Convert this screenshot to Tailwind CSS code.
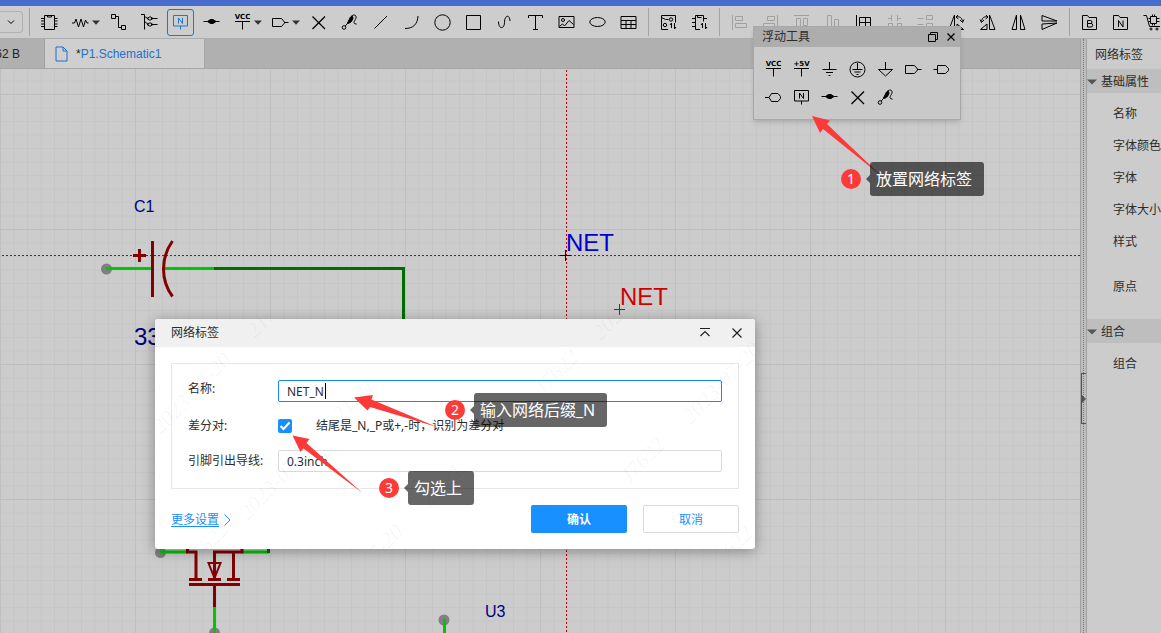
<!DOCTYPE html>
<html lang="zh-CN">
<head>
<meta charset="utf-8">
<title>P1.Schematic1</title>
<script src="https://cdn.jsdelivr.net/npm/@tailwindcss/browser@4"></script>
</head>
<body class="relative flex h-screen flex-col overflow-hidden bg-[#cccccc] font-['Noto_Sans','Noto_Sans_CJK_SC',sans-serif] text-xs text-[#2c2c2c]">

<!-- Shared icon shapes, 23x23 grid -->
<svg class="hidden" aria-hidden="true">
  <defs>
    <symbol id="chip" viewBox="0 0 23 23"><path d="M6.5 4.5h10v14h-10zM9.5 4.5v1.5h4V4.5M3 7.5h3.5M3 10h3.5M3 13h3.5M3 15.5h3.5M16.5 7.5h3M16.5 10h3M16.5 13h3M16.5 15.5h3"/></symbol>
    <symbol id="res" viewBox="0 0 23 23"><path d="M3 12h2.5l1.5-4 2.5 8 2.5-8 2.5 8 2-7 1.5 3h1.5"/></symbol>
    <symbol id="wire" viewBox="0 0 23 23"><path d="M4.5 3.5h4v4h-4zM14.5 14.5h4v4h-4zM8.5 5.5h3v11h3"/></symbol>
    <symbol id="bus" viewBox="0 0 23 23"><path d="M3 3.5h3.5v15M6.5 5.5l4 2.5M6.5 10.5l4 3M13 7.5h6.5M13 13.5h6.5"/><path d="M9 7.5l3-1.8 3 1.8-3 1.8zM9 13.5l3-1.8 3 1.8-3 1.8z"/></symbol>
    <symbol id="label" viewBox="0 0 23 23"><path d="M4.5 4.5h14V15h-14zM11.5 15v3.5M9.5 12.5V7l4 5.5V7"/></symbol>
    <symbol id="junction" viewBox="0 0 23 23"><path d="M3.5 10.5h16"/><path d="M7.5 10.5l3-2H13l3 2-3 2h-2.5z" fill="currentColor"/></symbol>
    <symbol id="vcc" viewBox="0 0 23 23"><path d="M4 10.5h15M11.5 10.5v8"/><text x="11.5" y="8" text-anchor="middle" font-size="7" font-weight="bold" font-family="DejaVu Sans" fill="currentColor" stroke="none">VCC</text></symbol>
    <symbol id="v5" viewBox="0 0 23 23"><path d="M4 10.5h15M11.5 10.5v8"/><text x="11.5" y="8" text-anchor="middle" font-size="7" font-weight="bold" font-family="DejaVu Sans" fill="currentColor" stroke="none">+5V</text></symbol>
    <symbol id="gnd" viewBox="0 0 23 23"><path d="M11.5 4v7.5M4.5 11.5h14M8 14.5h7M10.5 17.5h2"/></symbol>
    <symbol id="earth" viewBox="0 0 23 23"><circle cx="11.5" cy="11.5" r="7.5"/><path d="M11.5 5v6.5M6.5 11.5h10M8.5 14h6M10.5 16.5h2"/></symbol>
    <symbol id="agnd" viewBox="0 0 23 23"><path d="M11.5 4v7.5M4.5 11.5h14l-7 6.5z"/></symbol>
    <symbol id="out" viewBox="0 0 23 23"><path d="M3.5 7.5h9l3 3.5v1l-3 3.5h-9zM15.5 11.5h4"/></symbol>
    <symbol id="in" viewBox="0 0 23 23"><path d="M7.5 7.5h8l3 3v2l-3 3h-8zM3.5 11.5h4"/></symbol>
    <symbol id="bi" viewBox="0 0 23 23"><path d="M7 11.5l2.5-4H16l2.5 3v2l-2.5 3H9.5zM3 11.5h4"/></symbol>
    <symbol id="cross" viewBox="0 0 23 23"><path d="M5.5 5.5L18 18M18 5.5L5.5 18" stroke-width="1.3"/></symbol>
    <symbol id="probe" viewBox="0 0 23 23"><circle cx="6" cy="16.5" r="1.8"/><path d="M7.3 15l2.5-3M13 5.500c3.500-3 5.500-1 5 1.500-.5 2-3 4-1.500 5.500l2 .7"/><path d="M9.500 12l3-6 2-.8.5 2-1.500 3.300-3 2z" fill="currentColor"/></symbol>
    <symbol id="line" viewBox="0 0 23 23"><path d="M5.500 17.500L18 5"/></symbol>
    <symbol id="arc" viewBox="0 0 23 23"><path d="M5 17.500c8 0 12.500-4 13-12.500"/></symbol>
    <symbol id="circle" viewBox="0 0 23 23"><circle cx="11.5" cy="11.5" r="7.7"/></symbol>
    <symbol id="square" viewBox="0 0 23 23"><path d="M4.500 4.500h14v14h-14z"/></symbol>
    <symbol id="curve" viewBox="0 0 23 23"><path d="M5.500 10.500c0 8 6 8 6 1s5-9 5.500-1.500"/></symbol>
    <symbol id="tee" viewBox="0 0 23 23"><path d="M4.500 7V4.500h14V7M11.500 4.500v14M9 18.500h5"/></symbol>
    <symbol id="pic" viewBox="0 0 23 23"><path d="M4 5.500h15v11H4zM4.500 15.500l3-2.500 2 2 4.500-5.500 4.500 4"/><circle cx="8" cy="9" r="1.5"/></symbol>
    <symbol id="ellipse" viewBox="0 0 23 23"><ellipse cx="11.5" cy="11" rx="7.7" ry="4.5"/></symbol>
    <symbol id="table" viewBox="0 0 23 23"><path d="M4 5.500h15v12H4zM4 9.500h15M4 13.500h15M9 9.500v8M14 9.500v8"/></symbol>
    <symbol id="symA" viewBox="0 0 23 23"><path d="M11 18.500H4.500v-14h14v7M4.500 6.500l4 2h3M14.500 17v-5l-1.500 2M17.500 12v6l1.500-2"/><circle cx="8" cy="14" r="1.7"/><circle cx="14" cy="8.5" r="1.7"/></symbol>
    <symbol id="symB" viewBox="0 0 23 23"><path d="M12 18.500H7.500v-14h8v6M9.500 4.500v2h4M4 7.500h3.500M4 11.500h3.500M4 15.500h3.500M15.500 7.500H19M14.500 17v-5l-1.500 2M17.500 12v6l1.500-2"/></symbol>
    <symbol id="alL" viewBox="0 0 23 23"><path d="M4.500 4v15M7.500 5.500h7v4h-7zM7.500 12.500h11v4h-11z"/></symbol>
    <symbol id="alR" viewBox="0 0 23 23"><path d="M18.500 4v15M8.500 5.500h7v4h-7zM4.500 12.500h11v4h-11z"/></symbol>
    <symbol id="alT" viewBox="0 0 23 23"><path d="M4 4.500h15M6.500 7.500h4v11h-4zM13.500 7.500h4v7h-4z"/></symbol>
    <symbol id="alB" viewBox="0 0 23 23"><path d="M4 18.500h15M6.500 4.500h4v11h-4zM13.500 8.500h4v7h-4z"/></symbol>
    <symbol id="gridic" viewBox="0 0 23 23"><path d="M4.500 4v15M7.500 6.500h11v12h-11zM13.500 6.500v12M7.500 11.500h11"/></symbol>
    <symbol id="disH" viewBox="0 0 23 23"><path d="M8.500 4v6M14.500 4v6M5 7.500h3.500M14.500 7.500H18M5.500 12.500h4v5h-4zM14.500 12.500h4v5h-4z"/></symbol>
    <symbol id="disV" viewBox="0 0 23 23"><path d="M3.500 7.500h6M12.500 4.500h6v4h-6zM3.500 13.500h6M12.500 12.500h6v4h-6z"/></symbol>
    <symbol id="rotL" viewBox="0 0 23 23"><path d="M9.500 4v14.500H4zM12 18.500h6.500L12 13zM11 6c4-1 6 1 6.500 4.500M15 9l2.500 2.500L19 8.500M13 4l-2 2 2.500 2"/></symbol>
    <symbol id="rotR" viewBox="0 0 23 23"><path d="M13.500 4v14.500H19zM11 18.500H4.500L11 13zM12 6c-4-1-6 1-6.500 4.500M8 9l-2.500 2.500L4 8.500M10 4l2 2-2.500 2"/></symbol>
    <symbol id="flipH" viewBox="0 0 23 23"><path d="M9.500 4v14.500H5zM13.500 4v14.500H18z"/></symbol>
    <symbol id="flipV" viewBox="0 0 23 23"><path d="M4 4.500v5.500h15zM4 18.500V13l15-1z"/></symbol>
    <symbol id="fB" viewBox="0 0 23 23"><path d="M4.500 18.500v-14h5l1.500 2h7.500v12zM9.500 9.500h3a1.400 1.400 0 0 1 0 3h-3zM9.500 12.500h3.500a1.500 1.500 0 0 1 0 3.500H9.500z"/></symbol>
    <symbol id="fN" viewBox="0 0 23 23"><path d="M4.500 18.500v-14h5l1.500 2h7.500v12zM9.500 16V9.500l4.500 6.500V9.500"/></symbol>
    <symbol id="cart" viewBox="0 0 23 23"><path d="M3.500 4.500h3l3 11H20M10.500 5.500h6v7h-6zM8.500 7.500h2M8.500 10.500h2M16.500 7.500h3M16.500 10.500h3M12.500 3.500v2M14.500 3.500v2M12.500 12.500v2M14.500 12.500v2"/><circle cx="11" cy="18" r="1"/><circle cx="17" cy="18" r="1"/></symbol>
    <symbol id="caret" viewBox="0 0 8 5"><path d="M0 .5h8L4 4.800z" fill="#333" stroke="none"/></symbol>
    <symbol id="tri" viewBox="0 0 10 6"><path d="M0 .5h10L5 5.500z" fill="#555" stroke="none"/></symbol>
  </defs>
</svg>

<div class="h-1.5 shrink-0 bg-[#466dce]"></div>

<!-- Toolbar -->
<div class="flex h-[33px] shrink-0 items-center overflow-hidden border-b border-[#adadad] bg-[#cdcdcd] text-black [&_svg]:shrink-0 [&_svg]:fill-none [&_svg]:stroke-current [&_button]:flex [&_button]:h-[27px] [&_button]:shrink-0 [&_button]:items-center">
  <button aria-label="选择" class="!h-[22px] w-[23px] justify-center rounded-r-sm border border-l-0 border-[#b0b0b4]"><svg class="h-2 w-2" viewBox="0 0 8 8"><path d="M1 2.500l3 3 3-3"/></svg></button>
  <div class="ml-1.5 mr-1 h-7 w-px shrink-0 bg-[#a3a3a3]"></div>
  <button aria-label="器件" class="w-[31px] justify-center"><svg class="size-[23px]"><use href="#chip"/></svg></button>
  <button aria-label="电阻" class="w-[38px] pl-1"><svg class="size-[23px]"><use href="#res"/></svg><svg class="h-[5px] w-2"><use href="#caret"/></svg></button>
  <button aria-label="导线" class="w-[31px] justify-center"><svg class="size-[23px]"><use href="#wire"/></svg></button>
  <button aria-label="总线" class="w-[31px] justify-center"><svg class="size-[23px]"><use href="#bus"/></svg></button>
  <button aria-label="网络标签" class="mx-0.5 w-[27px] justify-center rounded-[3px] border border-[#1b78d0] text-[#1b78d0]"><svg class="size-[23px]"><use href="#label"/></svg></button>
  <button aria-label="短接符" class="w-[31px] justify-center"><svg class="size-[23px]"><use href="#junction"/></svg></button>
  <button aria-label="电源" class="w-[38px] pl-1"><svg class="size-[23px]"><use href="#vcc"/></svg><svg class="h-[5px] w-2"><use href="#caret"/></svg></button>
  <button aria-label="网络端口" class="w-[38px] pl-1"><svg class="size-[23px]"><use href="#out"/></svg><svg class="h-[5px] w-2"><use href="#caret"/></svg></button>
  <button aria-label="非连接标识" class="w-[31px] justify-center"><svg class="size-[23px]"><use href="#cross"/></svg></button>
  <button aria-label="探针" class="w-[31px] justify-center"><svg class="size-[23px]"><use href="#probe"/></svg></button>
  <button aria-label="折线" class="w-[31px] justify-center"><svg class="size-[23px]"><use href="#line"/></svg></button>
  <button aria-label="圆弧" class="w-[31px] justify-center"><svg class="size-[23px]"><use href="#arc"/></svg></button>
  <button aria-label="圆" class="w-[31px] justify-center"><svg class="size-[23px]"><use href="#circle"/></svg></button>
  <button aria-label="矩形" class="w-[31px] justify-center"><svg class="size-[23px]"><use href="#square"/></svg></button>
  <button aria-label="曲线" class="w-[31px] justify-center"><svg class="size-[23px]"><use href="#curve"/></svg></button>
  <button aria-label="文本" class="w-[31px] justify-center"><svg class="size-[23px]"><use href="#tee"/></svg></button>
  <button aria-label="图片" class="w-[31px] justify-center"><svg class="size-[23px]"><use href="#pic"/></svg></button>
  <button aria-label="椭圆" class="w-[31px] justify-center"><svg class="size-[23px]"><use href="#ellipse"/></svg></button>
  <button aria-label="表格" class="w-[31px] justify-center"><svg class="size-[23px]"><use href="#table"/></svg></button>
  <div class="mx-1 h-7 w-px shrink-0 bg-[#a3a3a3]"></div>
  <button aria-label="符号向导" class="w-[31px] justify-center"><svg class="size-[23px]"><use href="#symA"/></svg></button>
  <button aria-label="替换器件" class="w-[31px] justify-center"><svg class="size-[23px]"><use href="#symB"/></svg></button>
  <div class="mx-1 h-7 w-px shrink-0 bg-[#a3a3a3]"></div>
  <button aria-label="左对齐" class="w-[31px] justify-center text-[#a0a0a0]"><svg class="size-[23px]"><use href="#alL"/></svg></button>
  <button aria-label="右对齐" class="w-[31px] justify-center text-[#a0a0a0]"><svg class="size-[23px]"><use href="#alR"/></svg></button>
  <button aria-label="顶部对齐" class="w-[31px] justify-center text-[#a0a0a0]"><svg class="size-[23px]"><use href="#alT"/></svg></button>
  <button aria-label="底部对齐" class="w-[31px] justify-center text-[#a0a0a0]"><svg class="size-[23px]"><use href="#alB"/></svg></button>
  <button aria-label="对齐栅格" class="w-[31px] justify-center"><svg class="size-[23px]"><use href="#gridic"/></svg></button>
  <button aria-label="水平分布" class="w-[31px] justify-center text-[#a0a0a0]"><svg class="size-[23px]"><use href="#disH"/></svg></button>
  <button aria-label="垂直分布" class="w-[31px] justify-center text-[#a0a0a0]"><svg class="size-[23px]"><use href="#disV"/></svg></button>
  <button aria-label="左转" class="w-[31px] justify-center"><svg class="size-[23px]"><use href="#rotL"/></svg></button>
  <button aria-label="右转" class="w-[31px] justify-center"><svg class="size-[23px]"><use href="#rotR"/></svg></button>
  <button aria-label="水平翻转" class="w-[31px] justify-center"><svg class="size-[23px]"><use href="#flipH"/></svg></button>
  <button aria-label="垂直翻转" class="w-[31px] justify-center"><svg class="size-[23px]"><use href="#flipV"/></svg></button>
  <div class="mx-1 h-7 w-px shrink-0 bg-[#a3a3a3]"></div>
  <button aria-label="导出BOM" class="w-[31px] justify-center"><svg class="size-[23px]"><use href="#fB"/></svg></button>
  <button aria-label="导出网表" class="w-[31px] justify-center"><svg class="size-[23px]"><use href="#fN"/></svg></button>
  <button aria-label="下单" class="w-[31px] justify-center"><svg class="size-[23px]"><use href="#cart"/></svg></button>
</div>

<div class="flex min-h-0 flex-1">
  <!-- Editor -->
  <main class="flex min-w-0 flex-1 flex-col">
    <div class="flex h-[30px] shrink-0 border-b border-[#a6a6a6] bg-[#b0b0b0] font-['Liberation_Sans','Noto_Sans_CJK_SC',sans-serif]">
      <button class="flex w-[45px] items-center justify-end overflow-hidden border-r border-[#a0a0a0] pr-6 whitespace-nowrap text-[#222]">62 B</button>
      <button class="flex w-40 items-center gap-2 border-r border-[#a6a6a6] bg-[#cfcfcf] pl-2.5 text-[#1f6fd0]">
        <svg class="h-4 w-[13px] fill-none stroke-current" viewBox="0 0 13 16"><path d="M1 1h7l4 4v10H1zM8 1v4h4"/></svg>
        <span><span class="text-[#222]">*</span>P1.Schematic1</span>
      </button>
    </div>
    <svg class="min-h-0 w-full flex-1 font-['Liberation_Sans',sans-serif]" aria-label="原理图画布">
      <defs>
        <pattern id="minor" width="13.5" height="13.5" patternUnits="userSpaceOnUse" y="94"><path d="M.5 0v13.500M0 .5h13.500" stroke="#c6c6c6" fill="none"/></pattern>
        <pattern id="major" width="135" height="135" patternUnits="userSpaceOnUse" y="94"><path d="M.5 0v135M0 .5h135" stroke="#bfbfbf" fill="none"/></pattern>
      </defs>
      <g transform="translate(0 -69)" fill="none" stroke-width="3">
        <rect y="69" width="100%" height="100%" fill="url(#minor)"/>
        <rect y="69" width="100%" height="100%" fill="url(#major)"/>
        <g stroke="#c00000" stroke-width="1" stroke-dasharray="2 2"><path d="M2 255.500h3000M566.500 70v2000"/></g>
        <g fill="#808080"><circle cx="106.5" cy="269" r="5.5"/><circle cx="160.5" cy="552.5" r="5.5"/><circle cx="214.5" cy="633" r="5.5"/><circle cx="444" cy="620" r="5.5"/></g>
        <path stroke="#00c800" d="M106 268.500h47M164 268.500h51M160 552h28M242 552h27M214.500 607v26M444.500 619v200"/>
        <path stroke="#006e00" d="M214 268.500h189.500V330M268.500 548v5"/>
        <g stroke="#820000">
          <path d="M152.500 241v56M172.500 241c-12 17-12 39 0 55.500M133 255.500h13M139.500 249v13"/>
          <path d="M187.500 548v4h8.500v27.500M189 579.500h13M208 579.500h13M227 579.500h13M189 584.500h51M214.500 585v22M214.500 579.500V552h27.500v-4M233.500 552v27.500"/>
          <path d="M208.500 563h12l-6 15z" stroke-width="2"/>
        </g>
        <g fill="#000080" font-size="16"><text x="134" y="212">C1</text><text x="485" y="617">U3</text><text x="134" y="345" font-size="24">33</text></g>
        <text x="566" y="251" font-size="24" fill="#0000d0">NET</text>
        <text x="620" y="305" font-size="24" fill="#d00000">NET</text>
        <path stroke="#000090" stroke-width="1" d="M560 255.500h11M565.500 250v11"/>
        <path stroke="#c80000" stroke-width="1" d="M614 309.500h11M619.500 304v11"/>
      </g>
    </svg>
  </main>

  <!-- Splitter -->
  <div class="relative flex w-[7px] shrink-0 justify-center border-x border-[#a2a2a2] bg-[#bebebe]">
    <div class="h-full border-l border-dotted border-[#777]"></div>
    <button aria-label="收起" class="absolute top-[334px] right-0 flex h-[51px] w-[5px] items-center justify-end border border-r-0 border-[#5c5050]"><svg class="h-2 w-1" viewBox="0 0 4 8"><path d="M0 0l4 4-4 4z" fill="#5c5050"/></svg></button>
  </div>

  <!-- Properties -->
  <aside class="w-[74px] shrink-0 overflow-hidden whitespace-nowrap bg-[#cccccc]">
    <h2 class="flex h-[30px] items-center pt-0.5 pl-2">网络标签</h2>
    <h3 class="flex h-6 items-center gap-1 bg-[#bebebe] pt-0.5"><svg class="h-1.5 w-2.5 shrink-0"><use href="#tri"/></svg>基础属性</h3>
    <ul class="pt-[5px] pl-[26px] leading-8">
      <li>名称</li><li>字体颜色</li><li>字体</li><li>字体大小</li><li>样式</li><li class="mt-[13px]">原点</li>
    </ul>
    <h3 class="mt-4 flex h-6 items-center gap-1 bg-[#bebebe] pt-0.5"><svg class="h-1.5 w-2.5 shrink-0"><use href="#tri"/></svg>组合</h3>
    <ul class="pt-[5px] pl-[26px] leading-8"><li>组合</li></ul>
  </aside>
</div>

<!-- Floating tool palette -->
<section class="absolute top-[26px] left-[753px] w-52 border border-[#a8a8a8] bg-[#c9c9c9] text-black shadow-md">
  <header class="flex h-5 items-center gap-2 bg-[#adadad] pr-1 pl-2">
    <h2 class="flex-1 text-[#2c2c2c]">浮动工具</h2>
    <button aria-label="还原"><svg class="h-2.5 w-2.5 fill-none stroke-black" viewBox="0 0 10 10"><path d="M.5 2.500h7v7h-7zM2.500 2.500V.5h7v7h-2"/></svg></button>
    <button aria-label="关闭"><svg class="h-2.5 w-2.5 fill-none stroke-black" viewBox="0 0 10 10"><path stroke-width="1.3" d="M1.500 1.500l7 7M8.500 1.500l-7 7"/></svg></button>
  </header>
  <div class="flex flex-wrap px-[5px] pt-2 pb-2 [&_button]:flex [&_button]:size-7 [&_button]:items-center [&_button]:justify-center [&_svg]:size-[23px] [&_svg]:fill-none [&_svg]:stroke-current">
    <button aria-label="VCC"><svg><use href="#vcc"/></svg></button>
    <button aria-label="+5V"><svg><use href="#v5"/></svg></button>
    <button aria-label="GND"><svg><use href="#gnd"/></svg></button>
    <button aria-label="保护地"><svg><use href="#earth"/></svg></button>
    <button aria-label="模拟地"><svg><use href="#agnd"/></svg></button>
    <button aria-label="输出端口"><svg><use href="#out"/></svg></button>
    <button aria-label="输入端口"><svg><use href="#in"/></svg></button>
    <button aria-label="双向端口"><svg><use href="#bi"/></svg></button>
    <button aria-label="网络标签"><svg><use href="#label"/></svg></button>
    <button aria-label="短接符"><svg><use href="#junction"/></svg></button>
    <button aria-label="非连接标识"><svg><use href="#cross"/></svg></button>
    <button aria-label="探针"><svg><use href="#probe"/></svg></button>
  </div>
</section>

<!-- Net label dialog -->
<form class="absolute top-[319px] left-[155px] w-[600px] overflow-hidden rounded-[3px] bg-white shadow-[0_2px_14px_rgba(0,0,0,0.35)]">
  <header class="flex h-7 items-center gap-5 bg-[#f0f0f0] pr-3 pl-4">
    <h2 class="flex-1">网络标签</h2>
    <button type="button" aria-label="折叠"><svg class="size-3 fill-none stroke-[#222]" viewBox="0 0 12 12"><path d="M1 1.500h10M1.500 9L6 4.500 10.500 9" stroke-width="1.2"/></svg></button>
    <button type="button" aria-label="关闭"><svg class="size-3 fill-none stroke-[#222]" viewBox="0 0 12 12"><path d="M1.500 1.500l9 9M10.500 1.500l-9 9" stroke-width="1.2"/></svg></button>
  </header>
  <div class="px-4 py-4">
    <div class="grid grid-cols-[90px_1fr] gap-y-[13px] border border-[#e6e6e6] p-4">
      <label for="net" class="leading-[18px]">名称:</label>
      <input id="net" value="NET_N" class="h-[22px] min-w-0 rounded-[2px] border border-[#1a86f5] bg-white px-2 outline-none">
      <label for="diff" class="leading-[22px]">差分对:</label>
      <div class="flex items-center gap-6">
        <input id="diff" type="checkbox" checked class="peer sr-only">
        <label for="diff" class="flex size-3.5 items-center justify-center rounded-[2px] bg-[#1890ff]"><svg class="h-3 w-3 fill-none stroke-white" viewBox="0 0 12 12"><path d="M1.500 6l3 3 6-6.500" stroke-width="2"/></svg></label>
        <span>结尾是_N,_P或+,-时，识别为差分对</span>
      </div>
      <label for="lead" class="leading-[22px]">引脚引出导线:</label>
      <input id="lead" value="0.3inch" class="h-[22px] min-w-0 rounded-[2px] border border-[#d9d9d9] bg-white px-2">
    </div>
    <div class="mt-4 flex items-center gap-4">
      <div class="flex flex-1 items-center gap-1 pt-0.5 text-[#1890ff]"><a href="#" class="underline underline-offset-2">更多设置</a><svg class="h-3 w-2 fill-none stroke-current" viewBox="0 0 8 12"><path d="M1.500.5L7 6l-5.500 5.500"/></svg></div>
      <button type="submit" class="h-7 w-24 rounded-[2px] bg-[#1890ff] pt-px font-bold text-white">确认</button>
      <button type="button" class="h-7 w-24 rounded-[2px] border border-[#d9d9d9] pt-px text-[#1890ff]">取消</button>
    </div>
  </div>
  <svg class="pointer-events-none absolute inset-0 h-full w-full" aria-hidden="true">
    <g fill="#000" fill-opacity=".04" font-family="Liberation Serif" font-style="italic" font-size="22">
      <text transform="translate(6 116) rotate(-46)">2023-07-20</text>
      <text transform="translate(93 202) rotate(-46)">2023-07-20</text>
      <text transform="translate(178 288) rotate(-46)">2023-07-20</text>
      <text transform="translate(536 106) rotate(-46)">2023-07-20</text>
      <text transform="translate(446 22) rotate(-46)">2023-07-20</text>
      <text transform="translate(388 78) rotate(-46)">J7622</text>
      <text transform="translate(474 166) rotate(-46)">J7622</text>
      <text transform="translate(562 254) rotate(-46)">J7622</text>
      <text transform="translate(38 250) rotate(-46)">J7622</text>
      <text transform="translate(186 104) rotate(-46)">21:21</text>
      <text transform="translate(100 20) rotate(-46)">21:21</text>
      <text transform="translate(274 190) rotate(-46)">21:21</text>
    </g>
  </svg>
  <div class="pointer-events-none absolute top-[64px] left-[170px] h-4 w-px bg-black"></div>
</form>

<!-- Tutorial arrows and callouts -->
<svg class="pointer-events-none absolute inset-0 h-full w-full" aria-hidden="true">
  <g fill="#fc3a37">
    <path d="M812 116l18 4.500-3 3.500 55 52.500-59-47.500-3 4z"/>
    <path d="M354 397.500l19-2.500-1.500 4.500 65.500 27.500-67-20-2.500 3.500z"/>
    <path d="M292.500 435.500l17 3.500-3 4 56 50-59-44.500-3 3.500z"/>
  </g>
</svg>
<div class="absolute top-[162px] left-[841px] flex items-center text-base whitespace-nowrap text-white">
  <span class="mr-[5px] flex size-5 items-center justify-center rounded-full bg-[#fc3a37] text-sm">1</span><svg class="h-2 w-1" viewBox="0 0 4 8"><path d="M4 0v8L0 4z" fill-opacity=".6"/></svg><span class="rounded-[3px] bg-black/60 py-[5px] pr-3 pl-1.5 leading-6">放置网络标签</span>
</div>
<div class="absolute top-[393px] left-[445px] flex items-center text-base whitespace-nowrap text-white">
  <span class="mr-[5px] flex size-5 items-center justify-center rounded-full bg-[#fc3a37] text-sm">2</span><svg class="h-2 w-1" viewBox="0 0 4 8"><path d="M4 0v8L0 4z" fill-opacity=".6"/></svg><span class="rounded-[3px] bg-black/60 py-[5px] pr-3 pl-1.5 leading-6">输入网络后缀_N</span>
</div>
<div class="absolute top-[471px] left-[379px] flex items-center text-base whitespace-nowrap text-white">
  <span class="mr-[5px] flex size-5 items-center justify-center rounded-full bg-[#fc3a37] text-sm">3</span><svg class="h-2 w-1" viewBox="0 0 4 8"><path d="M4 0v8L0 4z" fill-opacity=".6"/></svg><span class="rounded-[3px] bg-black/60 py-[5px] pr-3 pl-1.5 leading-6">勾选上</span>
</div>
</body>
</html>
